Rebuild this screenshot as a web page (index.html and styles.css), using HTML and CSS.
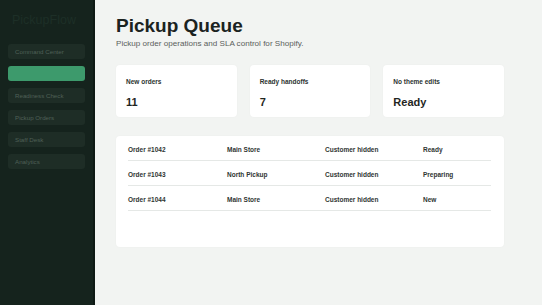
FILE: index.html
```html
<!DOCTYPE html>
<html>
<head>
<meta charset="utf-8">
<link rel="stylesheet" href="styles.css">
</head>
<body>
<div class="app">
  <aside class="sidebar">
    <div class="logo">PickupFlow</div>
    <nav class="nav">
      <div class="nav-item">Command Center</div>
      <div class="nav-item active">Pickup Queue</div>
      <div class="nav-item">Readiness Check</div>
      <div class="nav-item">Pickup Orders</div>
      <div class="nav-item">Staff Desk</div>
      <div class="nav-item">Analytics</div>
    </nav>
  </aside>
  <main class="main">
    <h1 class="title">Pickup Queue</h1>
    <p class="subtitle">Pickup order operations and SLA control for Shopify.</p>
    <section class="cards">
      <div class="card"><div class="card-label">New orders</div><div class="card-value">11</div></div>
      <div class="card"><div class="card-label">Ready handoffs</div><div class="card-value">7</div></div>
      <div class="card"><div class="card-label">No theme edits</div><div class="card-value">Ready</div></div>
    </section>
    <section class="panel">
      <div class="row"><span>Order #1042</span><span>Main Store</span><span>Customer hidden</span><span>Ready</span></div>
      <div class="row"><span>Order #1043</span><span>North Pickup</span><span>Customer hidden</span><span>Preparing</span></div>
      <div class="row"><span>Order #1044</span><span>Main Store</span><span>Customer hidden</span><span>New</span></div>
    </section>
  </main>
</div>
</body>
</html>
```
FILE: styles.css
```css
* { box-sizing: border-box; }
html, body { margin: 0; padding: 0; }
body {
  font-family: "Liberation Sans", Arial, sans-serif;
  background: #f2f4f2;
  color: #1c2420;
  width: 542px;
  height: 305px;
  overflow: hidden;
}
.app { display: flex; height: 305px; }
.sidebar {
  width: 95px;
  flex: 0 0 95px;
  background: #15231d;
  border-right: 2px solid #0e1914;
  padding: 11px 8px 0 8px;
}
.logo {
  font-size: 12.5px;
  color: #1d2f27;
  padding-left: 4px;
  height: 18px;
  line-height: 18px;
  margin-bottom: 15px;
}
.nav { display: flex; flex-direction: column; gap: 7px; }
.nav-item {
  height: 15px;
  line-height: 15px;
  border-radius: 3px;
  background: #1e2d26;
  color: #4f6057;
  font-size: 6.2px;
  padding-left: 7px;
  white-space: nowrap;
}
.nav-item.active { background: #3d9a6c; color: #3d9a6c; }
.main { flex: 1; padding: 15px 38px 0 21px; }
.title {
  margin: 0;
  font-size: 19px;
  font-weight: 700;
  line-height: 22px;
  color: #1b231f;
}
.subtitle {
  margin: 2px 0 0 0;
  font-size: 8.1px;
  color: #5a605c;
  line-height: 10px;
}
.cards {
  display: grid;
  grid-template-columns: 1fr 1fr 1fr;
  gap: 13px;
  margin-top: 16px;
}
.card {
  background: #fff;
  border-radius: 4px;
  height: 52px;
  padding: 13px 10px 0 10px;
  box-shadow: 0 0 2px rgba(0,0,0,0.04);
}
.card-label { font-size: 6.5px; font-weight: 700; color: #2c332f; line-height: 8px; }
.card-value { font-size: 11px; font-weight: 700; margin-top: 9px; color: #1f2622; line-height: 14px; }
.panel {
  margin-top: 19px;
  background: #fff;
  border-radius: 4px;
  height: 111px;
  padding: 0 13px 0 12px;
  box-shadow: 0 0 2px rgba(0,0,0,0.04);
}
.row {
  display: grid;
  grid-template-columns: 99px 98px 98px 1fr;
  padding: 10px 0 6px 0;
  line-height: 8px;
  border-bottom: 1px solid #e5e8e6;
  font-size: 6.5px;
  font-weight: 700;
  color: #2f3532;
}
```
